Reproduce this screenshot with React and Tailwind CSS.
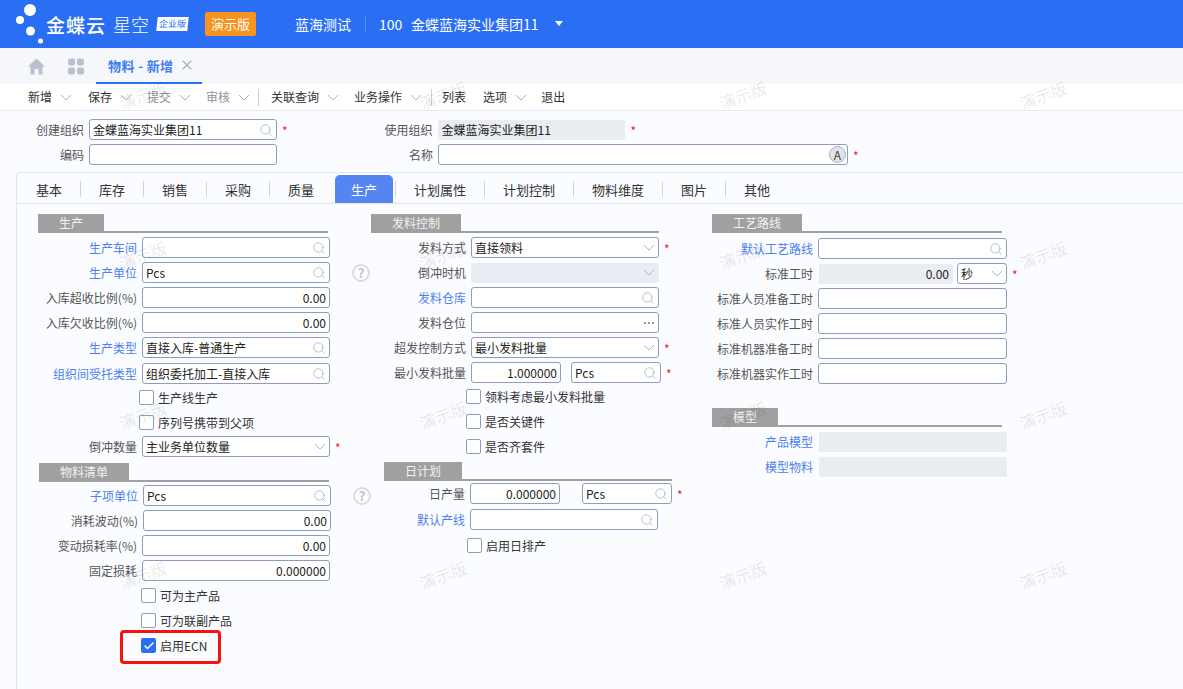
import { Search, X, Check } from "lucide-react";

const watermarks = Array.from({ length: 16 }, (_, i) => i);

function Chevron() {
  return (
    <svg width="12" height="7" viewBox="0 0 12 7" className="shrink-0">
      <polyline points="1,1 6,6 11,1" fill="none" stroke="#a8b4c8" strokeWidth="1" />
    </svg>
  );
}

function ToolItem({ label, more, muted, className = "" }) {
  return (
    <div className={`flex items-center ${className}`}>
      <span className={muted ? "text-[#8b919c]" : "text-[#333]"}>{label}</span>
      {more && (
        <span className="ml-2">
          <Chevron />
        </span>
      )}
    </div>
  );
}

function Section({ title, tabClass, lineClass, className = "" }) {
  return (
    <div className={`border-b-[2px] border-[#a0a0a0] h-[19px] ${lineClass} ${className}`}>
      <div className={`h-[18px] bg-[#a0a0a0] text-[#f2f2f2] text-center leading-[18px] ${tabClass}`}>
        {title}
      </div>
    </div>
  );
}

function Box({ children, className = "w-[188px]", icon }) {
  return (
    <div className={`h-[21px] shrink-0 bg-white border border-[#8e9dbb] rounded-[3px] flex items-center pl-[3px] pr-[3px] text-[#222] ${className}`}>
      <span className="flex-1 whitespace-nowrap">{children}</span>
      {icon === "search" && <Search size={14} strokeWidth={1.2} className="text-[#98a6bd] shrink-0" />}
      {icon === "select" && <Chevron />}
      {icon === "dots" && (
        <span className="flex gap-[2px] mr-px">
          <i className="w-[2px] h-[2px] bg-[#8d97a8]" />
          <i className="w-[2px] h-[2px] bg-[#8d97a8]" />
          <i className="w-[2px] h-[2px] bg-[#8d97a8]" />
        </span>
      )}
    </div>
  );
}

function NumBox({ children, className = "w-[188px]" }) {
  return (
    <div className={`h-[21px] shrink-0 bg-white border border-[#8e9dbb] rounded-[3px] flex items-center justify-end px-[3px] text-[#222] ${className}`}>
      {children}
    </div>
  );
}

function Gray({ children, className = "w-[188px]", chevron }) {
  return (
    <div className={`h-[20px] shrink-0 bg-[#e9ecf1] rounded-[2px] flex items-center px-[4px] text-[#222] ${className}`}>
      <span className="flex-1 whitespace-nowrap">{children}</span>
      {chevron && <Chevron />}
    </div>
  );
}

function Star({ className = "ml-[5px]" }) {
  return <span className={`text-[#ee1c25] text-[12px] leading-none mt-[3px] ${className}`}>*</span>;
}

function Row({ label, link, width, children }) {
  return (
    <div className="flex items-center h-[25px]">
      <span className={`shrink-0 text-right whitespace-nowrap mr-[5px] ${width} ${link ? "text-[#4f80ee]" : "text-[#555]"}`}>
        {label}
      </span>
      {children}
    </div>
  );
}

function CheckRow({ label, className, checked }) {
  return (
    <div className={`flex items-center h-[25px] ${className}`}>
      {checked ? (
        <span className="w-[15px] h-[15px] rounded-[2px] bg-[#2a6ff3] flex items-center justify-center">
          <Check size={12} strokeWidth={3} className="text-white" />
        </span>
      ) : (
        <span className="w-[15px] h-[15px] rounded-[2px] bg-white border border-[#8e9dbb]" />
      )}
      <span className="ml-[4px] text-[#333]">{label}</span>
    </div>
  );
}

function Help() {
  return (
    <span className="ml-[22px] w-[18px] h-[18px] shrink-0 rounded-full border-2 border-[#dcdcdc] text-[#c4c4c4] font-bold text-[13px] leading-none flex items-center justify-center">
      ?
    </span>
  );
}

const tabs = [
  { name: "基本", w: "w-[62px]" },
  { name: "库存", w: "w-[62px]" },
  { name: "销售", w: "w-[62px]" },
  { name: "采购", w: "w-[62px]" },
  { name: "质量", w: "w-[62px]", nosep: true },
  { name: "生产", w: "w-[62px]", active: true },
  { name: "计划属性", w: "w-[88px]" },
  { name: "计划控制", w: "w-[88px]" },
  { name: "物料维度", w: "w-[88px]" },
  { name: "图片", w: "w-[62px]" },
  { name: "其他", w: "w-[62px]", nosep: true },
];

export default function App() {
  return (
    <div className="relative w-full h-[689px] overflow-hidden bg-[#fbfcff] text-[12px] leading-none flex flex-col font-['Noto_Sans_CJK_SC',sans-serif]">
      {/* top bar */}
      <div className="h-[48px] bg-[#2a6ff3] flex items-center text-white shrink-0">
        <svg width="46" height="48" viewBox="0 0 46 48" className="shrink-0" fill="#fff">
          <circle cx="30" cy="10" r="6" />
          <circle cx="20" cy="20" r="4" />
          <circle cx="30.5" cy="31" r="4.5" />
          <circle cx="40.5" cy="41" r="2.5" />
        </svg>
        <span className="text-[19px] font-medium tracking-[1px] w-[67px]">金蝶云</span>
        <span className="text-[18px] font-extralight w-[44px]">星空</span>
        <span className="w-[31px] h-[14px] bg-white text-[#2a6ff3] text-[9px] text-center leading-[14px] -skew-x-6">企业版</span>
        <span className="ml-[17px] w-[51px] h-[24px] bg-[#f7931e] rounded-[2px] text-center leading-[24px] text-[13px]">演示版</span>
        <span className="ml-[39px] text-[14px]">蓝海测试</span>
        <span className="ml-[14px] w-px h-[17px] bg-[#5a8ef5]" />
        <span className="ml-[13px] text-[14px] w-[32px]">100</span>
        <span className="text-[14px]">金蝶蓝海实业集团11</span>
        <span className="ml-[16px] w-0 h-0 border-x-[4px] border-x-transparent border-t-[5px] border-t-white mb-[2px]" />
      </div>

      {/* page tabs */}
      <div className="h-[36px] bg-[#f5f7fb] flex items-stretch shrink-0">
        <div className="pl-[28px] flex items-center">
          <svg width="17" height="17" viewBox="0 0 17 17" fill="#b9c0cf">
            <path d="M8.5 0.5 L17 8.5 H14.5 V16.5 H10.5 V11 H6.5 V16.5 H2.5 V8.5 H0 Z" />
          </svg>
          <svg width="16" height="17" viewBox="0 0 16 17" fill="#b9c0cf" className="ml-[23px]">
            <rect x="0" y="0.5" width="7" height="7" rx="2" />
            <rect x="9" y="0.5" width="7" height="7" rx="2" />
            <rect x="0" y="9.5" width="7" height="7" rx="2" />
            <rect x="9" y="9.5" width="7" height="7" rx="2" />
          </svg>
        </div>
        <div className="ml-[12px] w-[106px] border-b-[2px] border-[#2a6ff3] flex items-center pl-[12px] text-[#3f7cf0] text-[13px] font-bold">
          <span className="whitespace-nowrap tracking-[0.4px]">物料 - 新增</span>
          <X size={16} strokeWidth={1.6} className="ml-[5px] text-[#a3abba]" />
        </div>
      </div>

      {/* toolbar */}
      <div className="h-[27px] bg-white flex items-center pl-[28px] shrink-0 border-b border-[#e8eaef]">
        <ToolItem label="新增" more />
        <ToolItem label="保存" more className="ml-[16px]" />
        <ToolItem label="提交" more muted className="ml-[15px]" />
        <ToolItem label="审核" more muted className="ml-[15px]" />
        <span className="ml-[8px] w-px h-[17px] bg-[#c9d3e4]" />
        <ToolItem label="关联查询" more className="ml-[12px]" />
        <ToolItem label="业务操作" more className="ml-[15px]" />
        <span className="ml-[9px] w-px h-[17px] bg-[#c9d3e4]" />
        <ToolItem label="列表" className="ml-[10px]" />
        <ToolItem label="选项" more className="ml-[17px]" />
        <ToolItem label="退出" className="ml-[14px]" />
      </div>

      {/* header fields */}
      <div className="pt-[6px] shrink-0">
        <div className="flex items-center h-[25px]">
          <span className="w-[84px] text-right text-[#555] mr-[5px]">创建组织</span>
          <Box icon="search">金蝶蓝海实业集团11</Box>
          <Star className="ml-[5px]" />
          <span className="ml-[95px] w-[50px] text-right text-[#555] mr-[5px]">使用组织</span>
          <Gray className="w-[187px]">金蝶蓝海实业集团11</Gray>
          <Star className="ml-[6px]" />
        </div>
        <div className="flex items-center h-[25px]">
          <span className="w-[84px] text-right text-[#555] mr-[5px]">编码</span>
          <Box> </Box>
          <span className="ml-[106px] w-[50px] text-right text-[#555] mr-[5px]">名称</span>
          <div className="w-[410px] h-[21px] bg-white border border-[#8e9dbb] rounded-[3px] flex items-center justify-end pr-[1px]">
            <span className="w-[17px] h-[17px] rounded-full bg-[#e0e3e9] border border-[#aab1be] flex items-center justify-center text-[12px] text-[#4a3b30]">
              A
            </span>
          </div>
          <Star className="ml-[5px]" />
        </div>
      </div>

      {/* detail panel */}
      <div className="ml-[16px] mt-[5px] flex-1 border-l border-t border-[#dfe6f2] rounded-tl-[4px]">
        <div className="h-[31px] flex items-end border-b border-[#e1e6f1] pl-px text-[13px] text-[#333]">
          {tabs.map((t) => (
            <div key={t.name} className="flex items-center h-[28px]">
              <div className={`h-[28px] flex items-center justify-center ${t.w}`}>
                {t.active ? (
                  <span className="w-[58px] h-[28px] rounded-t-[5px] bg-[#5585f0] text-white flex items-center justify-center">
                    {t.name}
                  </span>
                ) : (
                  t.name
                )}
              </div>
              <span className={`w-px h-[16px] ${t.nosep ? "" : "bg-[#cfd6e2]"}`} />
            </div>
          ))}
        </div>

        <div className="flex pl-[21px] pt-[10px]">
          {/* left column */}
          <div className="w-[333px] shrink-0">
            <Section title="生产" tabClass="w-[66px]" lineClass="w-[290px]" />
            <div className="mt-[2px]">
              <Row label="生产车间" link width="w-[99px]"><Box icon="search"> </Box></Row>
              <Row label="生产单位" link width="w-[99px]"><Box icon="search">Pcs</Box><Help /></Row>
              <Row label="入库超收比例(%)" width="w-[99px]"><NumBox>0.00</NumBox></Row>
              <Row label="入库欠收比例(%)" width="w-[99px]"><NumBox>0.00</NumBox></Row>
              <Row label="生产类型" link width="w-[99px]"><Box icon="search">直接入库-普通生产</Box></Row>
              <div className="mt-px">
                <Row label="组织间受托类型" link width="w-[99px]"><Box icon="search">组织委托加工-直接入库</Box></Row>
              </div>
              <CheckRow label="生产线生产" className="ml-[101px] -mt-px" />
              <CheckRow label="序列号携带到父项" className="ml-[101px]" />
              <div className="-mt-px">
                <Row label="倒冲数量" width="w-[99px]">
                  <Box icon="select">主业务单位数量</Box>
                  <Star />
                </Row>
              </div>
            </div>
            <Section title="物料清单" tabClass="w-[90px]" lineClass="w-[290px]" className="ml-px mt-[4px]" />
            <div className="mt-[1px]">
              <Row label="子项单位" link width="w-[100px]"><Box icon="search">Pcs</Box><Help /></Row>
              <Row label="消耗波动(%)" width="w-[100px]"><NumBox>0.00</NumBox></Row>
              <Row label="变动损耗率(%)" width="w-[99px]"><NumBox>0.00</NumBox></Row>
              <Row label="固定损耗" width="w-[99px]"><NumBox className="w-[188px] border-[#6f9bec]">0.000000</NumBox></Row>
              <CheckRow label="可为主产品" className="ml-[103px]" />
              <CheckRow label="可为联副产品" className="ml-[103px]" />
              <div className="relative">
                <CheckRow label="启用ECN" checked className="ml-[103px]" />
                <div className="absolute left-[82px] top-[-3px] w-[101px] h-[34px] border-[3px] border-[#f5130f] rounded-[4px]" />
              </div>
            </div>
          </div>

          {/* middle column */}
          <div className="w-[341px] shrink-0">
            <Section title="发料控制" tabClass="w-[90px]" lineClass="w-[288px]" />
            <div className="mt-[2px]">
              <Row label="发料方式" width="w-[95px]"><Box icon="select">直接领料</Box><Star /></Row>
              <Row label="倒冲时机" width="w-[95px]"><Gray chevron> </Gray></Row>
              <Row label="发料仓库" link width="w-[95px]"><Box icon="search"> </Box></Row>
              <Row label="发料仓位" width="w-[95px]"><Box icon="dots"> </Box></Row>
              <Row label="超发控制方式" width="w-[95px]"><Box icon="select">最小发料批量</Box><Star /></Row>
              <Row label="最小发料批量" width="w-[95px]">
                <NumBox className="w-[90px]">1.000000</NumBox>
                <Box icon="search" className="w-[90px] ml-[10px]">Pcs</Box>
                <Star />
              </Row>
              <CheckRow label="领料考虑最小发料批量" className="ml-[95px] -mt-px" />
              <CheckRow label="是否关键件" className="ml-[95px]" />
              <CheckRow label="是否齐套件" className="ml-[95px]" />
            </div>
            <Section title="日计划" tabClass="w-[78px]" lineClass="w-[288px]" className="ml-[13px] mt-[3px]" />
            <div>
              <Row label="日产量" width="w-[94px]">
                <NumBox className="w-[90px]">0.000000</NumBox>
                <Box icon="search" className="w-[90px] ml-[22px]">Pcs</Box>
                <Star />
              </Row>
              <div className="mt-px">
                <Row label="默认产线" link width="w-[94px]"><Box icon="search"> </Box></Row>
              </div>
              <div className="mt-px">
                <CheckRow label="启用日排产" className="ml-[96px]" />
              </div>
            </div>
          </div>

          {/* right column */}
          <div className="w-[320px] shrink-0">
            <Section title="工艺路线" tabClass="w-[90px]" lineClass="w-[290px]" />
            <div className="mt-[3px]">
              <Row label="默认工艺路线" link width="w-[101px]"><Box icon="search" className="w-[189px]"> </Box></Row>
              <Row label="标准工时" width="w-[101px]">
                <Gray className="w-[134px] ml-px"><span className="block text-right">0.00</span></Gray>
                <Box icon="select" className="w-[50px] ml-[4px]">秒</Box>
                <Star className="ml-[5px]" />
              </Row>
              <Row label="标准人员准备工时" width="w-[101px]"><Box className="w-[189px]"> </Box></Row>
              <Row label="标准人员实作工时" width="w-[101px]"><Box className="w-[189px]"> </Box></Row>
              <Row label="标准机器准备工时" width="w-[101px]"><Box className="w-[189px]"> </Box></Row>
              <Row label="标准机器实作工时" width="w-[101px]"><Box className="w-[189px]"> </Box></Row>
            </div>
            <Section title="模型" tabClass="w-[66px]" lineClass="w-[290px]" className="mt-[22px]" />
            <div className="mt-[2px]">
              <Row label="产品模型" link width="w-[101px]"><Gray className="w-[188px] ml-px"> </Gray></Row>
              <Row label="模型物料" link width="w-[101px]"><Gray className="w-[188px] ml-px"> </Gray></Row>
            </div>
          </div>
        </div>
      </div>

      {/* watermark layer */}
      <div className="pointer-events-none absolute left-[-7px] top-[15px] grid grid-cols-[repeat(4,300px)] auto-rows-[160px]">
        {watermarks.map((i) => (
          <div key={i} className="flex items-center justify-center">
            <span className="-rotate-20 text-[16px] text-black/10">演示版</span>
          </div>
        ))}
      </div>
    </div>
  );
}
